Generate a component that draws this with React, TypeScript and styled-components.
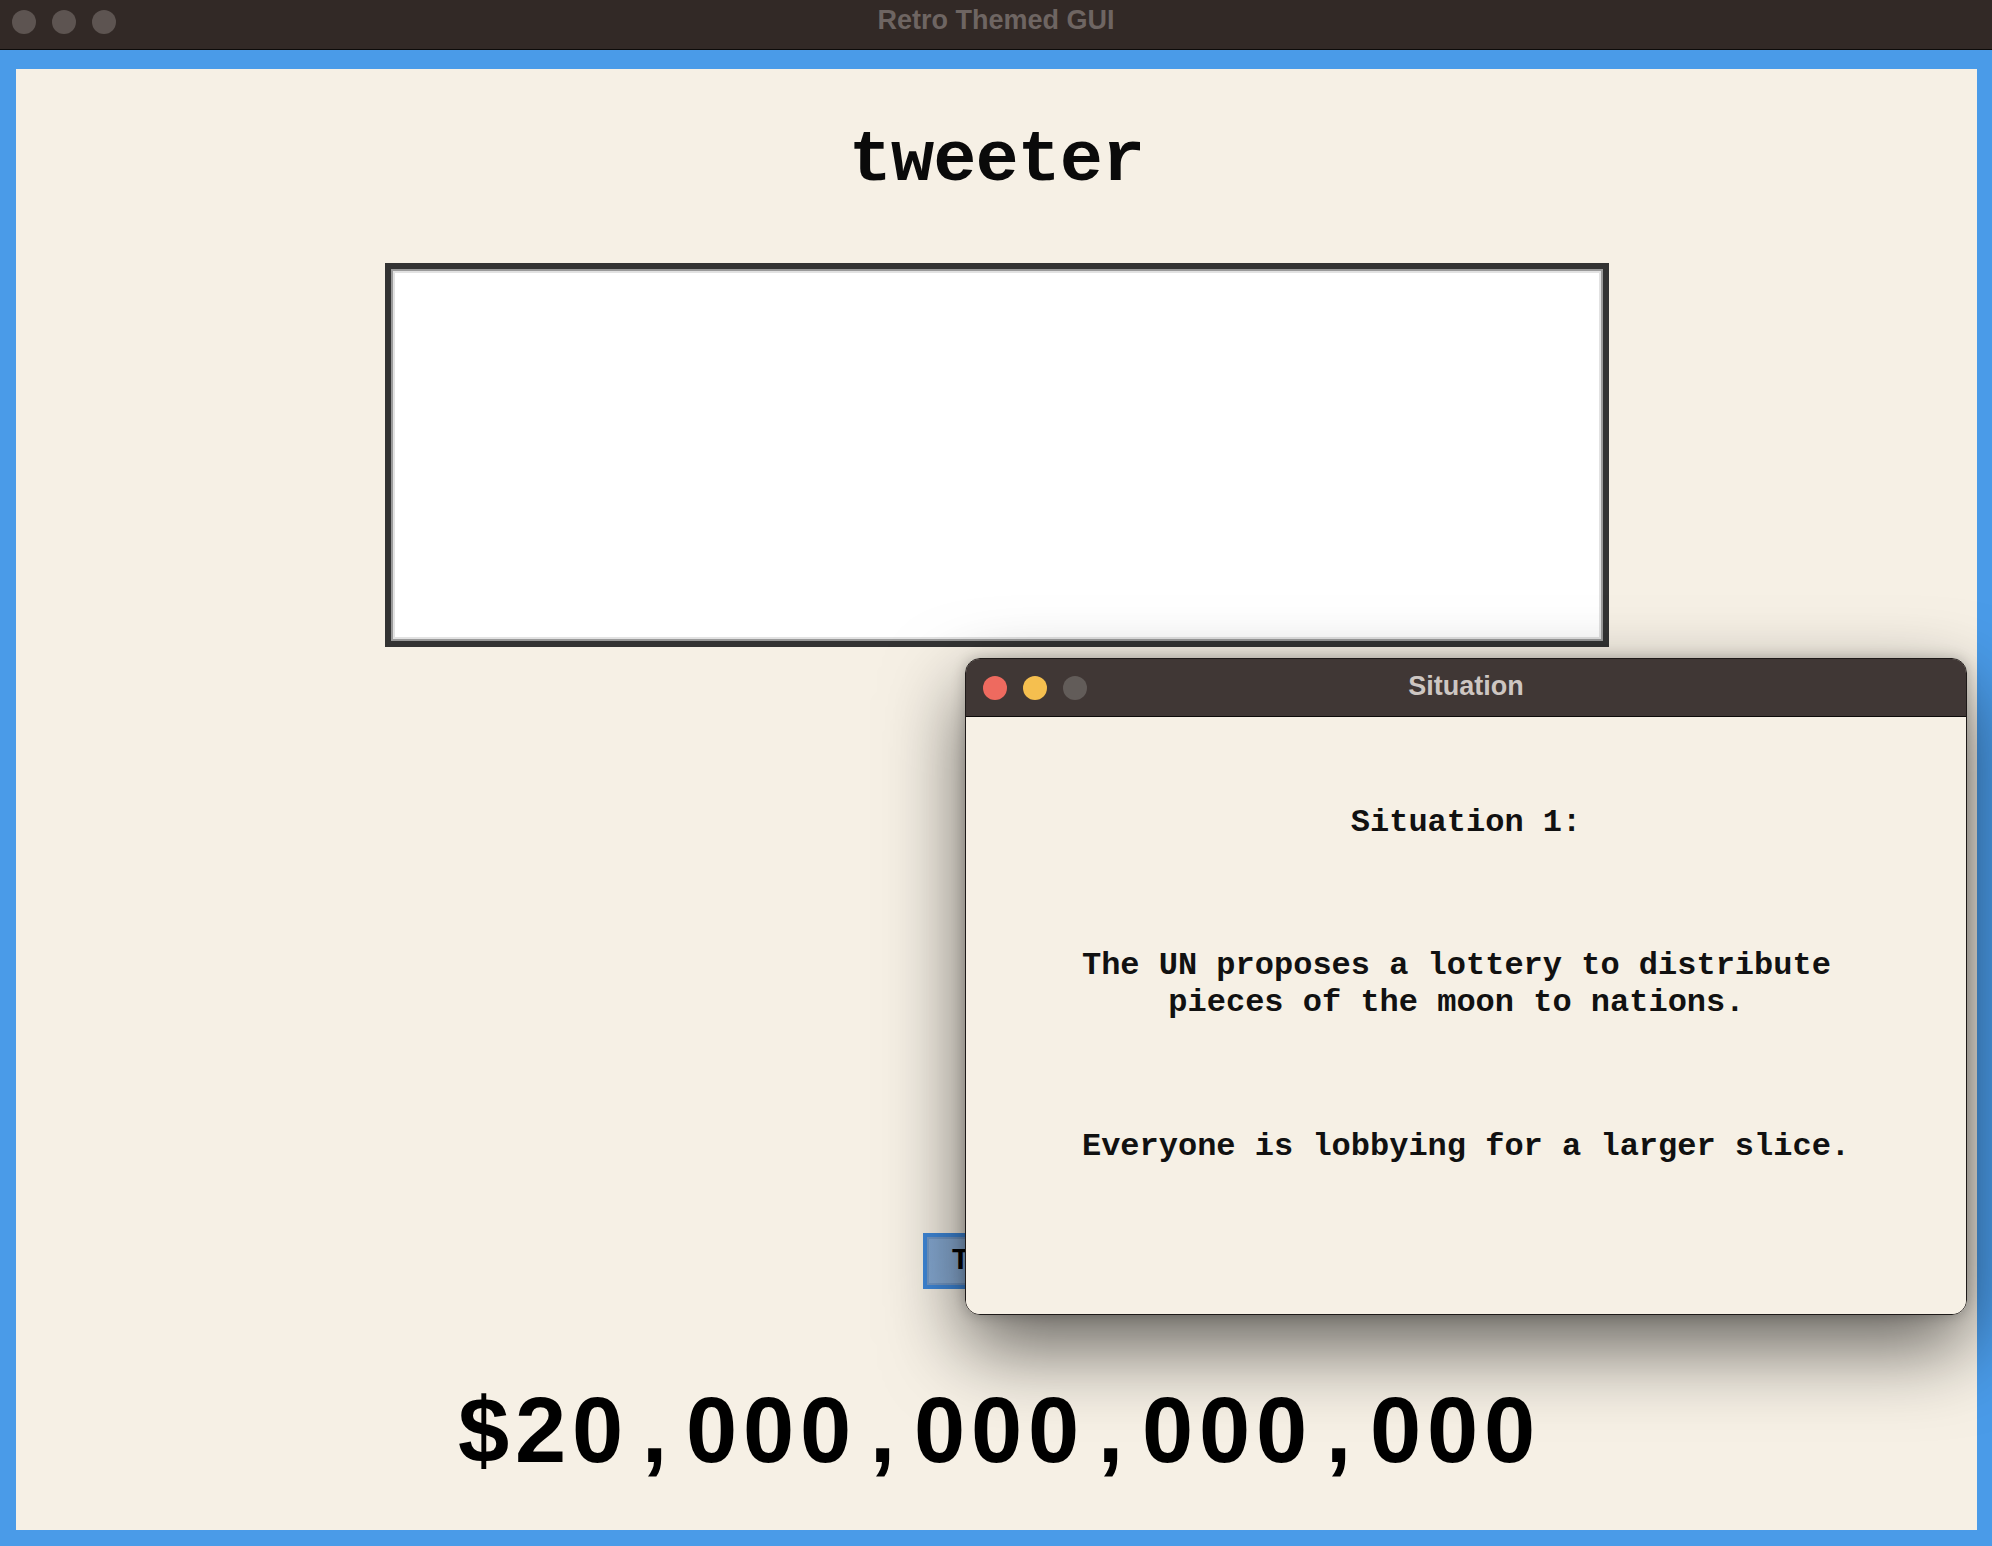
import React from "react";
import styled, { createGlobalStyle } from "styled-components";

const GlobalStyle = createGlobalStyle`
  html, body {
    margin: 0;
    padding: 0;
    background: #322926;
    overflow: hidden;
  }
  * { box-sizing: border-box; }
`;

const Frame = styled.div`
  width: 100vw;
  height: 100vh;
  display: flex;
  flex-direction: column;
`;

const TitleBar = styled.div<{ $bg: string; $height: number; $pad: number }>`
  height: ${(p) => p.$height}px;
  flex: 0 0 ${(p) => p.$height}px;
  background: ${(p) => p.$bg};
  border-bottom: 1px solid #0d0b0a;
  display: grid;
  grid-template-columns: 1fr auto 1fr;
  align-items: center;
  padding: 0 ${(p) => p.$pad}px;
`;

const Lights = styled.div<{ $offsetY: number }>`
  display: flex;
  gap: 16px;
  align-items: center;
  transform: translateY(${(p) => p.$offsetY}px);
`;

const Light = styled.span<{ $color: string }>`
  width: 24px;
  height: 24px;
  border-radius: 50%;
  background: ${(p) => p.$color};
  display: block;
`;

const TitleText = styled.div<{ $color: string; $offsetY: number }>`
  font-family: "Liberation Sans", Arial, sans-serif;
  font-weight: 700;
  font-size: 27px;
  color: ${(p) => p.$color};
  transform: translateY(${(p) => p.$offsetY}px);
  white-space: nowrap;
`;

const Screen = styled.div`
  flex: 1;
  background: #4a9be8;
  padding: 19px 15px 16px 16px;
  display: flex;
`;

const Content = styled.div`
  flex: 1;
  background: #f6f0e5;
  position: relative;
  display: flex;
  flex-direction: column;
  align-items: center;
  padding-top: 57px;
`;

const Heading = styled.h1`
  margin: 0;
  font-family: "Liberation Mono", "Courier New", monospace;
  font-weight: 700;
  font-size: 72px;
  line-height: 70px;
  color: #0a0a0a;
  letter-spacing: -1px;
`;

const TweetBox = styled.textarea`
  margin-top: 67px;
  width: 1224px;
  height: 384px;
  flex: 0 0 384px;
  resize: none;
  background: #ffffff;
  border: 6px solid #333333;
  box-shadow: inset 0 0 0 2px #9a9a9a, inset 0 0 0 4px #e2e2e2;
  outline: none;
  padding: 8px;
  font-family: "Liberation Mono", monospace;
  font-size: 24px;
`;

const TweetButton = styled.button`
  margin-top: 586px;
  width: 148px;
  height: 56px;
  flex: 0 0 56px;
  border: 4px solid #3f88da;
  box-shadow: inset 0 0 0 2px #7399c8;
  background: linear-gradient(90deg, #86aad4, #9dbde0);
  font-family: "Liberation Mono", "Courier New", monospace;
  font-weight: 700;
  font-size: 30px;
  color: #000;
  padding: 0;
`;

const Balance = styled.div`
  margin-top: 94px;
  display: flex;
  font-family: "Liberation Sans Narrow", "Liberation Sans", Arial, sans-serif;
  font-stretch: condensed;
  font-weight: 700;
  font-size: 92px;
  line-height: 95px;
  color: #000;
  white-space: nowrap;
`;

const Cell = styled.span`
  width: 57px;
  text-align: center;
  display: block;
`;

const Window = styled.div`
  position: absolute;
  left: 949px;
  top: 589px;
  width: 1002px;
  height: 657px;
  border-radius: 15px;
  border: 1px solid #1e1a19;
  overflow: hidden;
  display: flex;
  flex-direction: column;
  box-shadow: 0 32px 80px rgba(0, 0, 0, 0.6), 0 0 14px rgba(0, 0, 0, 0.22);
`;

const WindowBody = styled.div`
  flex: 1;
  background: #f6f0e5;
  display: flex;
  flex-direction: column;
  align-items: center;
  padding-top: 87px;
`;

const Line = styled.div<{ $gap: number }>`
  margin-top: ${(p) => p.$gap}px;
  font-family: "Liberation Mono", "Courier New", monospace;
  font-weight: 700;
  font-size: 32px;
  line-height: 37px;
  color: #111;
  text-align: center;
  white-space: pre;
`;

const amount = "$20,000,000,000,000";

export default function App() {
  return (
    <>
      <GlobalStyle />
      <Frame>
        <TitleBar $bg="#322926" $height={50} $pad={12}>
          <Lights $offsetY={-3}>
            <Light $color="#5d5451" />
            <Light $color="#5d5451" />
            <Light $color="#5d5451" />
          </Lights>
          <TitleText $color="#6e6562" $offsetY={-4}>Retro Themed GUI</TitleText>
          <span />
        </TitleBar>
        <Screen>
          <Content>
            <Heading>tweeter</Heading>
            <TweetBox aria-label="tweet" />
            <TweetButton>Tweet</TweetButton>
            <Balance aria-label={amount}>
              {amount.split("").map((ch, i) => (
                <Cell key={i}>{ch}</Cell>
              ))}
            </Balance>

            <Window>
              <TitleBar $bg="#403735" $height={58} $pad={17}>
                <Lights $offsetY={0}>
                  <Light $color="#ee6a5f" />
                  <Light $color="#f5bf4f" />
                  <Light $color="#625c59" />
                </Lights>
                <TitleText $color="#cdc6c2" $offsetY={-1}>Situation</TitleText>
                <span />
              </TitleBar>
              <WindowBody>
                <Line $gap={0}>Situation 1:</Line>
                <Line $gap={106}>{"The UN proposes a lottery to distribute \npieces of the moon to nations. "}</Line>
                <Line $gap={107}>Everyone is lobbying for a larger slice.</Line>
              </WindowBody>
            </Window>
          </Content>
        </Screen>
      </Frame>
    </>
  );
}
